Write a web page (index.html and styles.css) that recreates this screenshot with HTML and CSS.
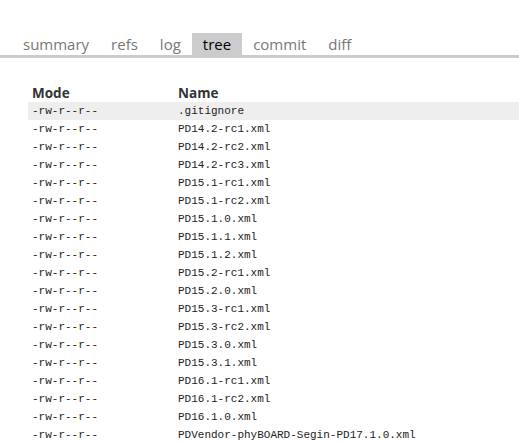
FILE: index.html
```html
<!DOCTYPE html>
<html lang="en">
<head>
<meta charset="UTF-8">
<title>tree</title>
<link rel="stylesheet" href="styles.css">
</head>
<body>
    <div class="tabs">
        <a href="#">summary</a>
        <a href="#">refs</a>
        <a href="#">log</a>
        <a href="#" class="active">tree</a>
        <a href="#">commit</a>
        <a href="#">diff</a>
    </div>

    <table class="list">
        <tr class="nohover">
            <th class="mode">Mode</th>
            <th>Name</th>
        </tr>
        <tr class="hover"><td class="ls-mode">-rw-r--r--</td><td class="ls-blob">.gitignore</td></tr>
        <tr><td class="ls-mode">-rw-r--r--</td><td class="ls-blob">PD14.2-rc1.xml</td></tr>
        <tr><td class="ls-mode">-rw-r--r--</td><td class="ls-blob">PD14.2-rc2.xml</td></tr>
        <tr><td class="ls-mode">-rw-r--r--</td><td class="ls-blob">PD14.2-rc3.xml</td></tr>
        <tr><td class="ls-mode">-rw-r--r--</td><td class="ls-blob">PD15.1-rc1.xml</td></tr>
        <tr><td class="ls-mode">-rw-r--r--</td><td class="ls-blob">PD15.1-rc2.xml</td></tr>
        <tr><td class="ls-mode">-rw-r--r--</td><td class="ls-blob">PD15.1.0.xml</td></tr>
        <tr><td class="ls-mode">-rw-r--r--</td><td class="ls-blob">PD15.1.1.xml</td></tr>
        <tr><td class="ls-mode">-rw-r--r--</td><td class="ls-blob">PD15.1.2.xml</td></tr>
        <tr><td class="ls-mode">-rw-r--r--</td><td class="ls-blob">PD15.2-rc1.xml</td></tr>
        <tr><td class="ls-mode">-rw-r--r--</td><td class="ls-blob">PD15.2.0.xml</td></tr>
        <tr><td class="ls-mode">-rw-r--r--</td><td class="ls-blob">PD15.3-rc1.xml</td></tr>
        <tr><td class="ls-mode">-rw-r--r--</td><td class="ls-blob">PD15.3-rc2.xml</td></tr>
        <tr><td class="ls-mode">-rw-r--r--</td><td class="ls-blob">PD15.3.0.xml</td></tr>
        <tr><td class="ls-mode">-rw-r--r--</td><td class="ls-blob">PD15.3.1.xml</td></tr>
        <tr><td class="ls-mode">-rw-r--r--</td><td class="ls-blob">PD16.1-rc1.xml</td></tr>
        <tr><td class="ls-mode">-rw-r--r--</td><td class="ls-blob">PD16.1-rc2.xml</td></tr>
        <tr><td class="ls-mode">-rw-r--r--</td><td class="ls-blob">PD16.1.0.xml</td></tr>
        <tr><td class="ls-mode">-rw-r--r--</td><td class="ls-blob">PDVendor-phyBOARD-Segin-PD17.1.0.xml</td></tr>
    </table>
</body>
</html>
```

FILE: styles.css
```css
body {
    margin: 0;
    font-family: 'Open Sans', 'Liberation Sans', sans-serif;
    color: #000;
    background: #fff;
    overflow: hidden;
}

/* tab bar */
.tabs {
    display: flex;
    margin-top: 33px;
    padding-left: 12px;
    border-bottom: 3px solid #ccc;
}

.tabs a {
    display: block;
    padding: 0 11px;
    height: 22px;
    line-height: 23px;
    font-size: 15px;
    color: #777;
    text-decoration: none;
}

.tabs a.active {
    background-color: #ccc;
    color: #000;
}

/* file list */
table.list {
    margin-top: 27px;
    margin-left: 28px;
    width: calc(100% - 28px);
    border-collapse: collapse;
}

table.list th {
    text-align: left;
    font-size: 13.5px;
    font-weight: bold;
    color: #333;
    padding: 0 4px;
    height: 17px;
    line-height: 17px;
}

table.list th.mode {
    width: 138px;
}

table.list td {
    font-family: 'Liberation Mono', monospace;
    font-size: 11px;
    color: #222;
    padding: 0 4px;
    height: 18px;
    line-height: 18px;
    white-space: nowrap;
}

table.list tr.hover {
    background-color: #eee;
}
```
